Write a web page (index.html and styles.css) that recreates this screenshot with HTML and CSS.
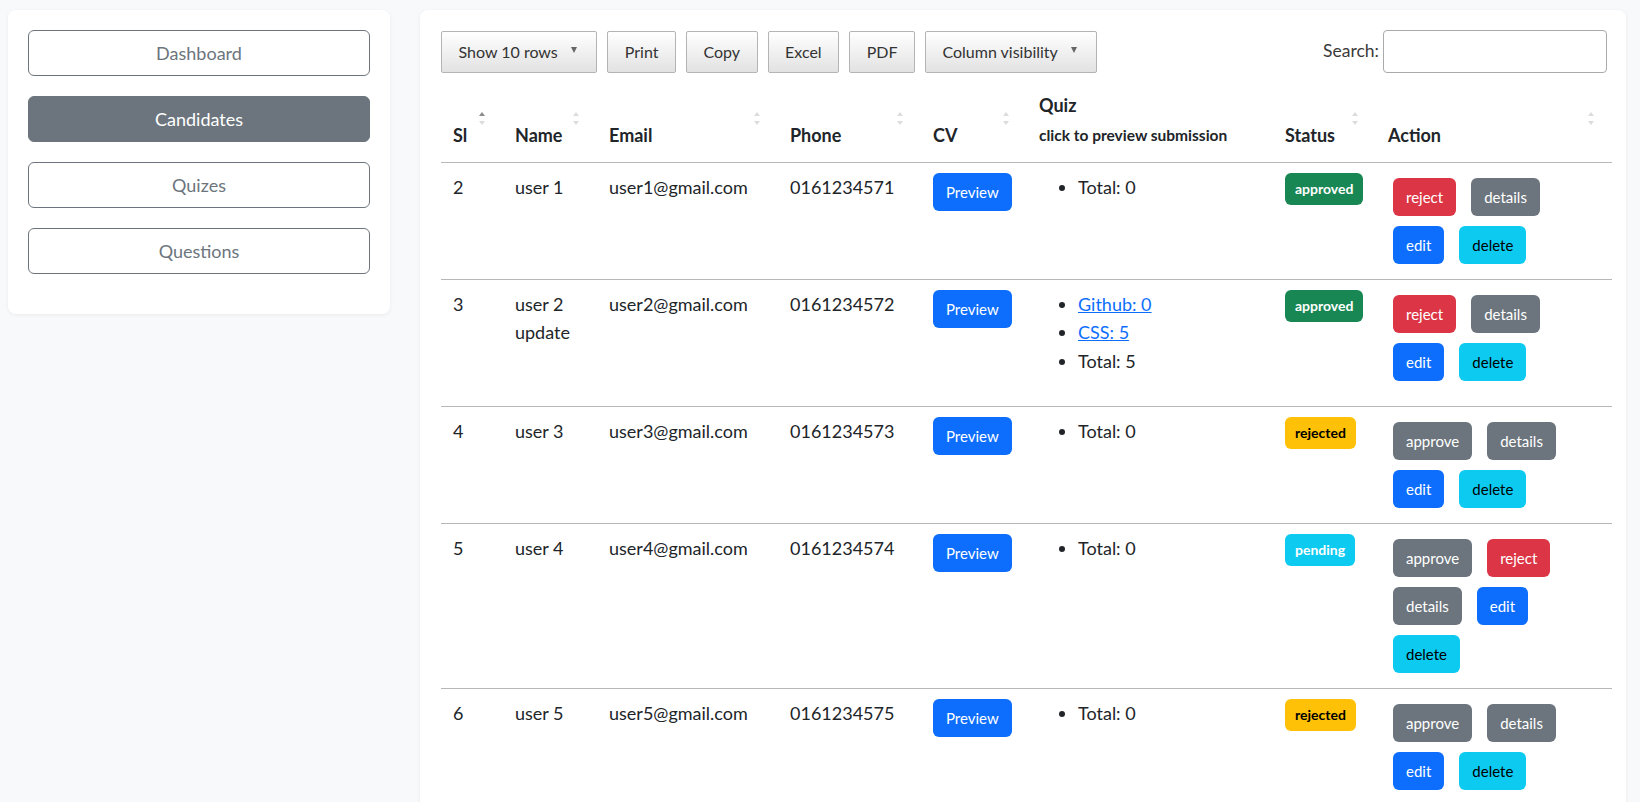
FILE: index.html
```html
<!DOCTYPE html>
<html lang="en">
<head>
<meta charset="utf-8">
<title>Candidates</title>
<link rel="stylesheet" href="styles.css">
</head>
<body>
<div class="layout">
  <aside class="side-card">
    <a class="side-btn" href="#">Dashboard</a>
    <a class="side-btn active" href="#">Candidates</a>
    <a class="side-btn" href="#">Quizes</a>
    <a class="side-btn" href="#">Questions</a>
  </aside>
  <main class="main-card">
    <div class="toolbar">
      <div class="dt-buttons">
        <button class="dt-btn">Show 10 rows<span class="caret"></span></button>
        <button class="dt-btn">Print</button>
        <button class="dt-btn">Copy</button>
        <button class="dt-btn">Excel</button>
        <button class="dt-btn">PDF</button>
        <button class="dt-btn">Column visibility<span class="caret"></span></button>
      </div>
      <label class="search">Search:<input class="search-input" type="search"></label>
    </div>
    <table class="data">
      <colgroup>
        <col class="c-sl"><col class="c-name"><col class="c-email"><col class="c-phone">
        <col class="c-cv"><col class="c-quiz"><col class="c-status"><col class="c-action">
      </colgroup>
      <thead>
        <tr>
          <th class="sort asc">Sl</th>
          <th class="sort">Name</th>
          <th class="sort">Email</th>
          <th class="sort">Phone</th>
          <th class="sort">CV</th>
          <th>Quiz<br><span class="th-sub">click to preview submission</span></th>
          <th class="sort">Status</th>
          <th class="sort">Action</th>
        </tr>
      </thead>
      <tbody>
        <tr>
          <td>2</td><td>user 1</td><td>user1@gmail.com</td><td>0161234571</td>
          <td><a class="btn btn-primary" href="#">Preview</a></td>
          <td><ul class="quiz"><li>Total: 0</li></ul></td>
          <td><span class="badge bg-success">approved</span></td>
          <td>
            <div class="act-line"><a class="btn btn-danger" href="#">reject</a><a class="btn btn-secondary" href="#">details</a></div>
            <div class="act-line"><a class="btn btn-primary" href="#">edit</a><a class="btn btn-info" href="#">delete</a></div>
          </td>
        </tr>
        <tr>
          <td>3</td><td>user 2 update</td><td>user2@gmail.com</td><td>0161234572</td>
          <td><a class="btn btn-primary" href="#">Preview</a></td>
          <td><ul class="quiz"><li><a href="#">Github: 0</a></li><li><a href="#">CSS: 5</a></li><li>Total: 5</li></ul></td>
          <td><span class="badge bg-success">approved</span></td>
          <td>
            <div class="act-line"><a class="btn btn-danger" href="#">reject</a><a class="btn btn-secondary" href="#">details</a></div>
            <div class="act-line"><a class="btn btn-primary" href="#">edit</a><a class="btn btn-info" href="#">delete</a></div>
          </td>
        </tr>
        <tr>
          <td>4</td><td>user 3</td><td>user3@gmail.com</td><td>0161234573</td>
          <td><a class="btn btn-primary" href="#">Preview</a></td>
          <td><ul class="quiz"><li>Total: 0</li></ul></td>
          <td><span class="badge bg-warning">rejected</span></td>
          <td>
            <div class="act-line"><a class="btn btn-secondary" href="#">approve</a><a class="btn btn-secondary" href="#">details</a></div>
            <div class="act-line"><a class="btn btn-primary" href="#">edit</a><a class="btn btn-info" href="#">delete</a></div>
          </td>
        </tr>
        <tr>
          <td>5</td><td>user 4</td><td>user4@gmail.com</td><td>0161234574</td>
          <td><a class="btn btn-primary" href="#">Preview</a></td>
          <td><ul class="quiz"><li>Total: 0</li></ul></td>
          <td><span class="badge bg-info">pending</span></td>
          <td>
            <div class="act-line"><a class="btn btn-secondary" href="#">approve</a><a class="btn btn-danger" href="#">reject</a></div>
            <div class="act-line"><a class="btn btn-secondary" href="#">details</a><a class="btn btn-primary" href="#">edit</a></div>
            <div class="act-line"><a class="btn btn-info" href="#">delete</a></div>
          </td>
        </tr>
        <tr>
          <td>6</td><td>user 5</td><td>user5@gmail.com</td><td>0161234575</td>
          <td><a class="btn btn-primary" href="#">Preview</a></td>
          <td><ul class="quiz"><li>Total: 0</li></ul></td>
          <td><span class="badge bg-warning">rejected</span></td>
          <td>
            <div class="act-line"><a class="btn btn-secondary" href="#">approve</a><a class="btn btn-secondary" href="#">details</a></div>
            <div class="act-line"><a class="btn btn-primary" href="#">edit</a><a class="btn btn-info" href="#">delete</a></div>
          </td>
        </tr>
      </tbody>
    </table>
  </main>
</div>
</body>
</html>
```

FILE: styles.css
```css
html, body {
  height: 100%;
  overflow: hidden;
}
body {
  margin: 0;
  padding: 10px 14px 0 8px;
  background: #f8f9fa;
  font-family: "Lato", "Noto Sans", sans-serif;
  font-size: 18px;
  line-height: 28.8px;
  color: #212529;
}
.layout {
  display: grid;
  grid-template-columns: 382px 1206px;
  column-gap: 30px;
  align-items: start;
}

/* sidebar */
.side-card {
  background: #fff;
  border-radius: 8px;
  box-shadow: 0 1px 4px rgba(0, 0, 0, 0.06);
  padding: 20px 20px 40px;
  display: flex;
  flex-direction: column;
  gap: 20px;
}
.side-btn {
  display: block;
  text-align: center;
  border: 1px solid #6c757d;
  border-radius: 6px;
  color: #6c757d;
  text-decoration: none;
  font-size: 18px;
  line-height: 27px;
  padding: 8.5px 0;
}
.side-btn.active {
  background: #6c757d;
  color: #fff;
}

/* main card */
.main-card {
  background: #fff;
  border-radius: 8px;
  box-shadow: 0 1px 4px rgba(0, 0, 0, 0.06);
  padding: 20px 14px 0 21px;
  min-height: 900px;
}
.toolbar {
  display: flex;
  justify-content: space-between;
  align-items: center;
  padding-right: 5px;
  margin-bottom: 8px;
}
.dt-buttons {
  display: flex;
  gap: 10px;
}
.dt-btn {
  font-family: "Lato", "Noto Sans", sans-serif;
  font-size: 16px;
  line-height: 24px;
  padding: 8px 16.5px;
  color: #333;
  border: 1px solid #b4b4b4;
  border-radius: 2px;
  background: linear-gradient(to bottom, #ffffff 0%, #e2e2e2 100%);
  display: flex;
  align-items: center;
}
.caret {
  display: inline-block;
  width: 0;
  height: 0;
  margin-left: 13px;
  margin-right: 3px;
  border-left: 3.5px solid transparent;
  border-right: 3.5px solid transparent;
  border-top: 6px solid #666;
  position: relative;
  top: -2px;
}
.search {
  display: flex;
  align-items: center;
  font-size: 17.5px;
  color: #3a3a3a;
}
.search-input {
  margin-left: 4px;
  width: 224px;
  height: 43px;
  box-sizing: border-box;
  border: 1px solid #aaa;
  border-radius: 4px;
  background: #fff;
}

/* table */
.data {
  width: 100%;
  border-collapse: collapse;
  table-layout: fixed;
}
.c-sl { width: 62px; }
.c-name { width: 94px; }
.c-email { width: 181px; }
.c-phone { width: 143px; }
.c-cv { width: 106px; }
.c-quiz { width: 246px; }
.c-status { width: 103px; }
.c-action { width: 236px; }

.data th {
  position: relative;
  text-align: left;
  vertical-align: bottom;
  font-weight: 700;
  padding: 10px 12px 12px;
  border-bottom: 1px solid #b7b7b7;
}
.th-sub {
  font-size: 15.5px;
  font-weight: 700;
}
.data th.sort::before,
.data th.sort::after {
  content: "";
  position: absolute;
  right: 18px;
  width: 0;
  height: 0;
  border-left: 3px solid transparent;
  border-right: 3px solid transparent;
}
.data th.sort::before {
  top: calc(50% - 9px);
  border-bottom: 4px solid #dcdcdc;
}
.data th.sort::after {
  top: calc(50%);
  border-top: 4px solid #dcdcdc;
}
.data th.sort.asc::before {
  border-bottom-color: #8a8a8a;
}
.data td {
  vertical-align: top;
  padding: 10px 12px;
  border-bottom: 1px solid #b7b7b7;
}

.quiz {
  margin: 0 0 20px;
  padding-left: 39px;
}
.quiz a {
  color: #0d6efd;
  text-decoration: underline;
}

.btn {
  display: inline-block;
  vertical-align: top;
  font-size: 15px;
  line-height: 24px;
  padding: 6px 12px;
  border: 1px solid transparent;
  border-radius: 6px;
  text-decoration: none;
  color: #fff;
}
.btn-primary { background: #0d6efd; }
.btn-danger { background: #dc3545; }
.btn-secondary { background: #6c757d; }
.btn-info { background: #0dcaf0; color: #000; }

.act-line {
  display: flex;
  column-gap: 5px;
}
.act-line .btn {
  margin: 5px;
}

.badge {
  display: inline-block;
  vertical-align: top;
  font-size: 14px;
  font-weight: 700;
  line-height: 14px;
  padding: 9px 10px;
  border-radius: 6px;
  color: #fff;
}
.bg-success { background: #198754; }
.bg-warning { background: #ffc107; color: #000; }
.bg-info { background: #0dcaf0; }
```
